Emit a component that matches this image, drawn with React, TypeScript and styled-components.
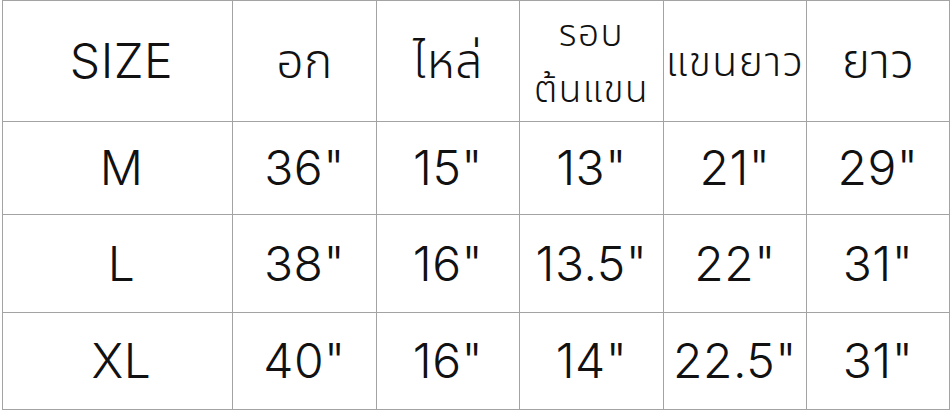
import React from 'react';
import styled, { createGlobalStyle } from 'styled-components';

const GlobalStyle = createGlobalStyle`
    html, body {
        margin: 0;
        padding: 0;
        background: #ffffff;
    }
    body {
        font-family: Inter, "Noto Sans Thai", "Noto Sans Thai UI", Kanit, Prompt, Sarabun, "Noto Sans", sans-serif;
        color: #111111;
    }
`;

const Page = styled.div`
    width: 950px;
    height: 412px;
    padding-left: 2px;
    box-sizing: border-box;
    background: #ffffff;
`;

const Table = styled.div`
    display: grid;
    grid-template-columns: 230px 144px 143px 144px 143px 143px;
    grid-template-rows: 121px 93px 98px 97px;
    width: max-content;
    border-top: 1px solid #a3a3a3;
    border-left: 1px solid #a3a3a3;
`;

// size: 'lg' normal, 'md' for the long header, 'sm' for the two-line header
const Cell = styled.div<{ $size?: 'lg' | 'md' | 'sm'; $first?: boolean }>`
    display: flex;
    flex-direction: column;
    align-items: center;
    justify-content: center;
    box-sizing: border-box;
    padding-left: ${(p) => (p.$first ? '8px' : '0')};
    border-right: 1px solid #a3a3a3;
    border-bottom: 1px solid #a3a3a3;
    font-size: ${(p) => (p.$size === 'sm' ? '37px' : p.$size === 'md' ? '41px' : '48px')};
    font-weight: 260;
    line-height: ${(p) => (p.$size === 'sm' ? '56px' : '1')};
    letter-spacing: ${(p) => (p.$size ? '1.5px' : '0.5px')};
    white-space: nowrap;
`;

const Line = styled.span`
    display: block;
`;

const headers: (string | string[])[] = ['SIZE', 'อก', 'ไหล่', ['รอบ', 'ต้นแขน'], 'แขนยาว', 'ยาว'];

const rows = [
    ['M', '36"', '15"', '13"', '21"', '29"'],
    ['L', '38"', '16"', '13.5"', '22"', '31"'],
    ['XL', '40"', '16"', '14"', '22.5"', '31"'],
];

function App() {
    return (
        <>
            <GlobalStyle />
            <Page>
                <Table>
                    {headers.map((h, i) =>
                        Array.isArray(h) ? (
                            <Cell key={i} $size="sm">
                                {h.map((t) => (
                                    <Line key={t}>{t}</Line>
                                ))}
                            </Cell>
                        ) : (
                            <Cell key={i} $size={h === 'แขนยาว' ? 'md' : undefined} $first={i === 0}>
                                {h}
                            </Cell>
                        )
                    )}
                    {rows.map((r) =>
                        r.map((v, j) => (
                            <Cell key={r[0] + j} $first={j === 0}>
                                {v}
                            </Cell>
                        ))
                    )}
                </Table>
            </Page>
        </>
    );
}

export default App;
